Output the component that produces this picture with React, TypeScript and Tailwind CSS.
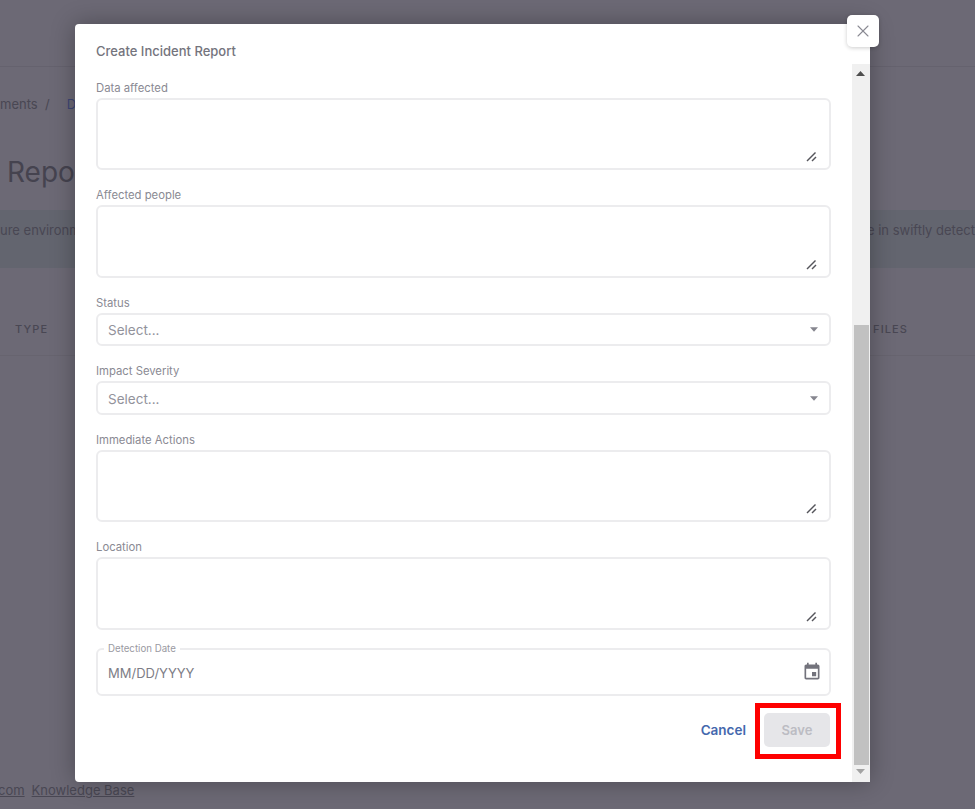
import React from "react";
import { X } from "lucide-react";

const font = { fontFamily: "Inter, 'Liberation Sans', sans-serif" };

function Grip() {
  return (
    <svg className="absolute right-[12px] bottom-[6px] pointer-events-none" width="11" height="11" viewBox="0 0 11 11" fill="none" stroke="#55555b" strokeWidth="1.4">
      <path d="M1 10L9.5 1.5" />
      <path d="M6 10L10 6" />
    </svg>
  );
}

function Label({ children }: { children: React.ReactNode }) {
  return <label className="block h-[18px] text-[11.3px] leading-[16px] text-[#8a8a93]">{children}</label>;
}

function AreaField({ label, h }: { label: string; h: string }) {
  return (
    <div>
      <Label>{label}</Label>
      <div className={`relative ${h} rounded-[6px] border-2 border-[#ececee] bg-white`}>
        <textarea className="block w-full h-full resize-none bg-transparent outline-none" aria-label={label} />
        <Grip />
      </div>
    </div>
  );
}

function SelectField({ label, h }: { label: string; h: string }) {
  return (
    <div>
      <Label>{label}</Label>
      <div className={`flex items-center justify-between ${h} rounded-[6px] border-2 border-[#ececee] bg-white pl-[10px] pr-[11px]`}>
        <span className="text-[13.5px] leading-[20px] pt-px text-[#92929b]">Select...</span>
        <svg width="8" height="5" viewBox="0 0 9 5"><path d="M0 0H9L4.5 5Z" fill="#86868f" /></svg>
      </div>
    </div>
  );
}

function Scrollbar() {
  return (
    <div className="flex flex-col w-[18px] shrink-0 bg-[#f0f0f0]">
      <div className="h-[261px] flex justify-center pt-[7px] pr-px">
        <svg width="9" height="5" viewBox="0 0 9 5"><path d="M0 5H9L4.5 0Z" fill="#4e4e4e" /></svg>
      </div>
      <div className="h-[440px] ml-[2px] mr-px bg-[#c1c1c1]" />
      <div className="flex-1 flex justify-center pt-[4px] pr-px">
        <svg width="9" height="5" viewBox="0 0 9 5"><path d="M0 0H9L4.5 5Z" fill="#a3a3a3" /></svg>
      </div>
    </div>
  );
}

function Background() {
  return (
    <div className="flex flex-col h-full text-[#494753]">
      <div className="h-[67px] shrink-0 border-b border-[#65626e]" />
      <div className="h-[74px] shrink-0 pt-[28px] flex gap-[17px] whitespace-nowrap text-[13px] leading-[18px]">
        <span>ments&nbsp;&nbsp;/</span>
        <span className="text-[#3d4675]">Data</span>
      </div>
      <div className="h-[69px] shrink-0 pl-[7px] text-[28px] leading-[62px] text-[#45434f]">Reports</div>
      <div className="h-[58px] shrink-0 bg-[#63656f] flex items-start justify-between pt-[10px] text-[13px] leading-[20px] whitespace-nowrap overflow-hidden">
        <span>ure environment</span>
        <span>e in swiftly detect</span>
      </div>
      <div className="h-[88px] shrink-0 border-b border-[#67646f] flex items-center justify-between pl-[15px] pr-[67px] pt-[44px] pb-[9px] text-[11px] font-medium tracking-[0.1em]">
        <span>TYPE</span>
        <span>FILES</span>
      </div>
      <div className="flex-1" />
      <div className="h-[35px] shrink-0 flex gap-[7px] pt-[7px] text-[13px] leading-[18px] underline whitespace-nowrap -ml-[2px]">
        <span>com</span>
        <span>Knowledge Base</span>
      </div>
    </div>
  );
}

export default function App() {
  return (
    <div className="relative w-[975px] h-[809px] overflow-hidden bg-[#6c6975]" style={font}>
      <Background />
      <div className="absolute left-[75px] top-[24px] w-[795px] h-[758px] flex flex-col rounded-[4px] bg-white shadow-[0_0_24px_rgba(0,0,0,0.3)]">
        <div className="h-[40px] shrink-0 pl-[21px] pt-[18px] text-[13px] leading-[18px] font-medium text-[#74747d]">Create Incident Report</div>
        <div className="flex-1 flex min-h-0">
          <div className="flex-1 min-w-0 flex flex-col gap-[17px] pl-[21px] pr-[21px] pt-[16px]">
            <AreaField label="Data affected" h="h-[72px]" />
            <AreaField label="Affected people" h="h-[73px]" />
            <SelectField label="Status" h="h-[33px]" />
            <SelectField label="Impact Severity" h="h-[34px]" />
            <AreaField label="Immediate Actions" h="h-[72px]" />
            <AreaField label="Location" h="h-[73px]" />
            <div className="relative h-[48px] mt-px flex items-center justify-between rounded-[6px] border-2 border-[#ececee] pl-[10px] pr-[7px]">
              <span className="absolute left-[6px] -top-[7px] bg-white px-[4px] text-[9.7px] leading-[11px] text-[#9a9aa2]">Detection Date</span>
              <span className="text-[13px] leading-[20px] pt-[2px] text-[#7d7d86]">MM/DD/YYYY</span>
              <svg width="20" height="20" viewBox="0 0 24 24" fill="#73737c">
                <path d="M17 12h-5v5h5v-5zM16 1v2H8V1H6v2H5c-1.11 0-1.99.9-1.99 2L3 19c0 1.1.89 2 2 2h14c1.1 0 2-.9 2-2V5c0-1.1-.9-2-2-2h-1V1h-2zm3 18H5V8h14v11z" />
              </svg>
            </div>
            <div className="flex justify-end items-center gap-[18px] pr-px">
              <button className="text-[13.5px] font-semibold text-[#4468ad]">Cancel</button>
              <div className="relative">
                <button className="block w-[66px] h-[34px] rounded-[5px] bg-[#e6e6e9] pt-px text-[13px] font-semibold text-[#bcbcc3]">Save</button>
                <div className="absolute -left-[9px] -right-[11px] -top-[10px] -bottom-[12px] border-[5px] border-[#fe0000]" />
              </div>
            </div>
          </div>
          <Scrollbar />
        </div>
        <button className="absolute left-[772px] -top-[9px] w-[32px] h-[32px] flex items-center justify-center rounded-[5px] bg-white shadow-[0_1px_4px_rgba(0,0,0,0.2)] text-[#8a8a93]" aria-label="Close">
          <X size={20} strokeWidth={1.3} />
        </button>
      </div>
    </div>
  );
}
